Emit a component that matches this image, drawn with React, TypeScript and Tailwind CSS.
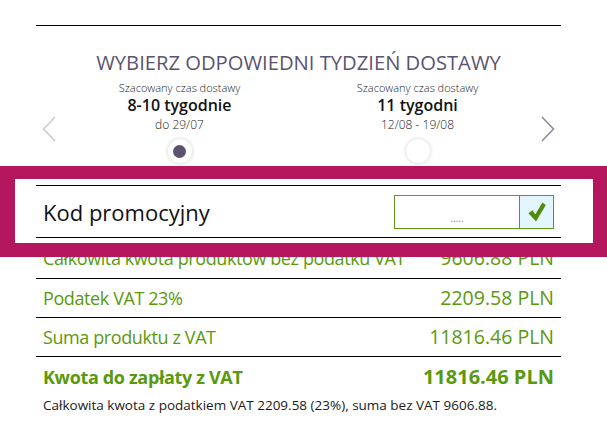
type Week = {
   label: string;
   title: string;
   range: string;
   selected?: boolean;
};

const weeks: Week[] = [
   { label: "Szacowany czas dostawy", title: "8-10 tygodnie", range: "do 29/07", selected: true },
   { label: "Szacowany czas dostawy", title: "11 tygodni", range: "12/08 - 19/08" },
];

const rows = [
   { name: "Całkowita kwota produktów bez podatku VAT", value: "9606.88 PLN", h: "h-[41px]" },
   { name: "Podatek VAT 23%", value: "2209.58 PLN", h: "h-[39px]" },
   { name: "Suma produktu z VAT", value: "11816.46 PLN", h: "h-[39px]" },
];

const CheckMark = () => (
   <svg width="18" height="20" viewBox="0 0 18 20">
      <path d="M0.4 11.2 L4.4 8.2 L7.4 12.2 L14.4 0.6 L17.8 3 L8 19.6 Z" fill="#4f8d0a" />
   </svg>
)

const Arrow = ({ dir, color }: { dir: "left" | "right"; color: string }) => (
   <svg width="14" height="26" viewBox="0 0 14 26">
      <polyline
         points={dir === "left" ? "13,1 1.5,13 13,25" : "1,1 12.5,13 1,25"}
         fill="none"
         stroke={color}
         strokeWidth="1.5"
      />
   </svg>
)

const App = () => {
   return (
      <div className="relative w-[607px] h-[432px] bg-white overflow-hidden text-[#111]" style={{ fontFamily: '"Open Sans", "Noto Sans", sans-serif' }}>
         <div className="ml-[36px] w-[525px] pt-[25px]">
            <div className="border-t border-black" />

            <h2 className="mt-[23px] h-[26px] text-center text-[20.2px] leading-[26px] uppercase text-[#5b5370]">
               Wybierz odpowiedni tydzień dostawy
            </h2>

            {/* karuzela tygodni */}
            <div className="flex items-start">
               <div className="w-[25px] pl-[6px] mt-[41px]">
                  <Arrow dir="left" color="#cacacd" />
               </div>
               <div className="flex flex-1 justify-center">
                  {weeks.map((w, i) => (
                     <div key={i} className="w-[238px] flex flex-col items-center pt-[6px]">
                        <p className="text-[11px] leading-[14px] font-light text-[#222]">{w.label}</p>
                        <p className="text-[16px] leading-[20px] font-semibold text-[#111]">{w.title}</p>
                        <p className="mt-[2px] text-[12px] leading-[16px] font-light text-[#222]">{w.range}</p>
                        <div className="mt-[6px] w-[24px] h-[24px] rounded-full bg-white shadow-[0_0_4px_rgba(0,0,0,0.2)] flex items-center justify-center">
                           {w.selected && <div className="w-[13px] h-[13px] rounded-full bg-[#5b5170]" />}
                        </div>
                     </div>
                  ))}
               </div>
               <div className="w-[25px] pr-[6px] mt-[41px] flex justify-end">
                  <Arrow dir="right" color="#8b8697" />
               </div>
            </div>

            {/* kod promocyjny */}
            <div className="relative z-20 mt-[22px] h-[53px] border-y border-black flex items-center justify-between pl-[7px] pr-[7px]">
               <span className="text-[22px] leading-[30px] text-[#111]">Kod promocyjny</span>
               <div className="flex h-[34px] border-[1.5px] border-[#5b9a12]">
                  <div className="w-[124px] flex items-end justify-center pb-[5px] text-[10px] leading-[10px] text-[#888]">.....</div>
                  <div className="w-[34px] border-l-[1.5px] border-[#5b9a12] bg-[#e4f6fd] flex items-center justify-center">
                     <CheckMark />
                  </div>
               </div>
            </div>

            {rows.map((r, i) => (
               <div key={i} className={`${r.h} border-b border-black flex items-center justify-between px-[7px] text-[#5a990d]`}>
                  <span className="text-[18px] tracking-[-0.4px]">{r.name}</span>
                  <span className="text-[19.5px]">{r.value}</span>
               </div>
            ))}

            <div className="h-[40px] flex items-center justify-between px-[7px] font-bold text-[#5a990d]">
               <span className="text-[18px] tracking-[-0.35px]">Kwota do zapłaty z VAT</span>
               <span className="text-[20px]">11816.46 PLN</span>
            </div>
            <p className="px-[7px] text-[13.5px] leading-[16px] text-[#1a1a1a]">
               Całkowita kwota z podatkiem VAT 2209.58 (23%), suma bez VAT 9606.88.
            </p>
         </div>

         {/* podswietlenie */}
         <div className="absolute z-10 top-[166px] left-0 w-[607px] h-[91px] bg-white border-[14px] border-l-[15px] border-t-[13px] border-[#b5175e]" />
      </div>
   )
}

export default App
